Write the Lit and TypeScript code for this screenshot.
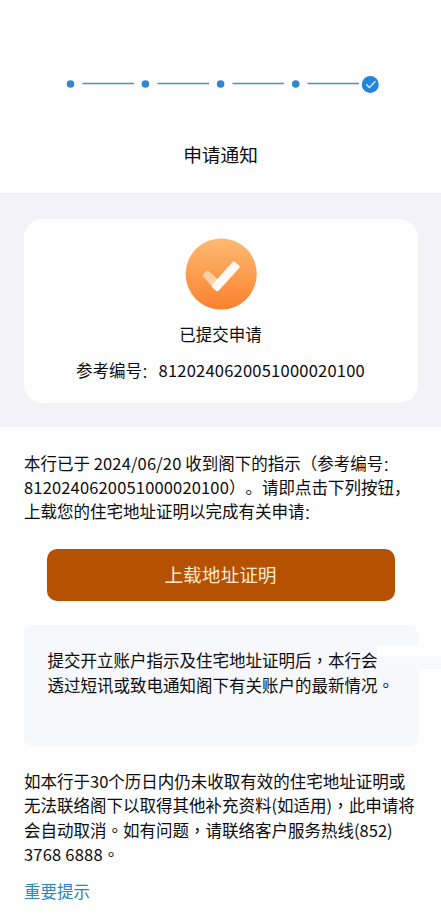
import { LitElement, html, css, svg } from "lit";
import { customElement } from "lit/decorators.js";

@customElement("step-progress")
class StepProgress extends LitElement {
  static styles = css`
    :host { display: block; height: 30px; }
    svg { display: block; }
  `;
  render() {
    const dots = [70.5, 145.4, 220.6, 295.7];
    return html`<svg width="441" height="30" viewBox="0 0 441 30" fill="none">
      ${dots.map((x, i) => svg`
        <circle cx=${x} cy="15" r="3.8" fill="#2f86d2"/>
        <path d="M${82.5 + i * 75} 14.5h51.5" stroke="#5290bd" stroke-width="1.6"/>`)}
      <circle cx="370.3" cy="15.5" r="8.5" fill="#2484dc"/>
      <path d="M366.2 15.3l3.2 3.2 6-6.2" stroke="#d9f0ff" stroke-width="1.3"/>
    </svg>`;
  }
}

@customElement("app-root")
export class AppRoot extends LitElement {
  static styles = css`
    :host {
      display: block;
      width: 441px;
      height: 917px;
      overflow: hidden;
      background: #fefefe;
      color: #0c0c0e;
      font: 16.5px/24.4px "Noto Sans CJK SC", sans-serif;
      text-spacing-trim: space-all;
    }
    header { height: 194px; border-bottom: 1px solid #ececf0; box-sizing: border-box; padding-top: 69px; }
    h1 { margin: 41px 0 0; font-size: 18.7px; line-height: 28px; font-weight: 400; text-align: center; }
    .band { background: #f3f2f8; height: 233px; box-sizing: border-box; padding: 25px 23.5px 0; }
    .card {
      background: #fefefe; height: 184px; border-radius: 19px; box-sizing: border-box; padding-top: 18px;
      display: flex; flex-direction: column; align-items: center;
    }
    .badge { display: block; }
    .status { margin-top: 10.5px; }
    .ref { margin-top: 12px; }
    .ref .num { letter-spacing: 0.22px; }
    .line { white-space: pre; height: 24.4px; }
    .tc { font-family: "Noto Sans CJK TC", sans-serif; }
    .colon { font-size: 14px; line-height: 1; margin: 0 3px 0 -0.5px; }
    .intro { padding: 23.6px 0 0 24px; }
    .num { letter-spacing: 0.16px; }
    button {
      display: block; width: 348px; height: 52px; margin: 25.2px 0 0 46.5px; padding: 0 0 3px; border: 0;
      border-radius: 10px; background: #b55100; color: #ffe9cf;
      font: 18.7px/49px "Noto Sans CJK SC", sans-serif;
    }
    .notice {
      position: relative; width: 394px; height: 121px; margin: 24px 0 0 24px; border-radius: 8px;
      background: #f7f8fc; box-sizing: border-box; padding: 23.4px 0 0 23.5px;
    }
    .notch { position: absolute; left: 353px; top: 20px; width: 64px; height: 11px; background: #fefefe; }
    .strip { position: absolute; left: 353px; top: 31px; width: 64px; height: 13px; background: #f8f9fc; }
    .terms { padding: 23px 0 0 24px; }
    .phone { letter-spacing: 0.2px; }
    .link { display: block; margin: 12px 0 0 24px; color: #2b86bb; text-decoration: none; }
  `;
  render() {
    const colon = html`<span class="colon">：</span>`;
    return html`
      <header>
        <step-progress></step-progress>
        <h1>申请通知</h1>
      </header>
      <section class="band">
        <div class="card">
          <svg class="badge" width="74" height="74" viewBox="0 0 74 74">
            <defs>
              <linearGradient id="disc" x1="0" y1="0" x2="0" y2="1">
                <stop offset="0" stop-color="#fdba73"/><stop offset="1" stop-color="#fb812d"/>
              </linearGradient>
            </defs>
            <circle cx="37.2" cy="37" r="35.6" fill="url(#disc)"/>
            <path d="M20.3 38.3L23.6 35.1L33 43.6L29 48.6Z" fill="#ffd0a6" stroke="#ffd0a6" stroke-width="3" stroke-linejoin="round"/>
            <path d="M33.3 52.2L29.8 49L49.8 26.7L53.6 29.9Z" fill="#fffaf5" stroke="#fffaf5" stroke-width="4" stroke-linejoin="round"/>
          </svg>
          <div class="status">已提交申请</div>
          <div class="ref">参考编号${colon}<span class="num">8120240620051000020100</span></div>
        </div>
      </section>
      <section class="intro">
        <div class="line">本行已于 <span class="num">2024/06/20</span> 收到阁下的指示（参考编号${colon}</div>
        <div class="line"><span class="num">8120240620051000020100</span>）。请即点击下列按钮，</div>
        <div class="line">上载您的住宅地址证明以完成有关申请${colon}</div>
      </section>
      <button>上载地址证明</button>
      <section class="notice">
        <div class="notch"></div>
        <div class="strip"></div>
        <div class="line">提交开立账户指示及住宅地址证明后<span class="tc">，</span>本行会</div>
        <div class="line">透过短讯或致电通知阁下有关账户的最新情况<span class="tc">。</span></div>
      </section>
      <section class="terms">
        <div class="line">如本行于30个历日内仍未收取有效的住宅地址证明或</div>
        <div class="line">无法联络阁下以取得其他补充资料(如适用)<span class="tc">，</span>此申请将</div>
        <div class="line">会自动取消<span class="tc">。</span>如有问题<span class="tc">，</span>请联络客户服务热线(852)</div>
        <div class="line"><span class="phone">3768 6888</span><span class="tc">。</span></div>
      </section>
      <a class="link">重要提示</a>
    `;
  }
}
